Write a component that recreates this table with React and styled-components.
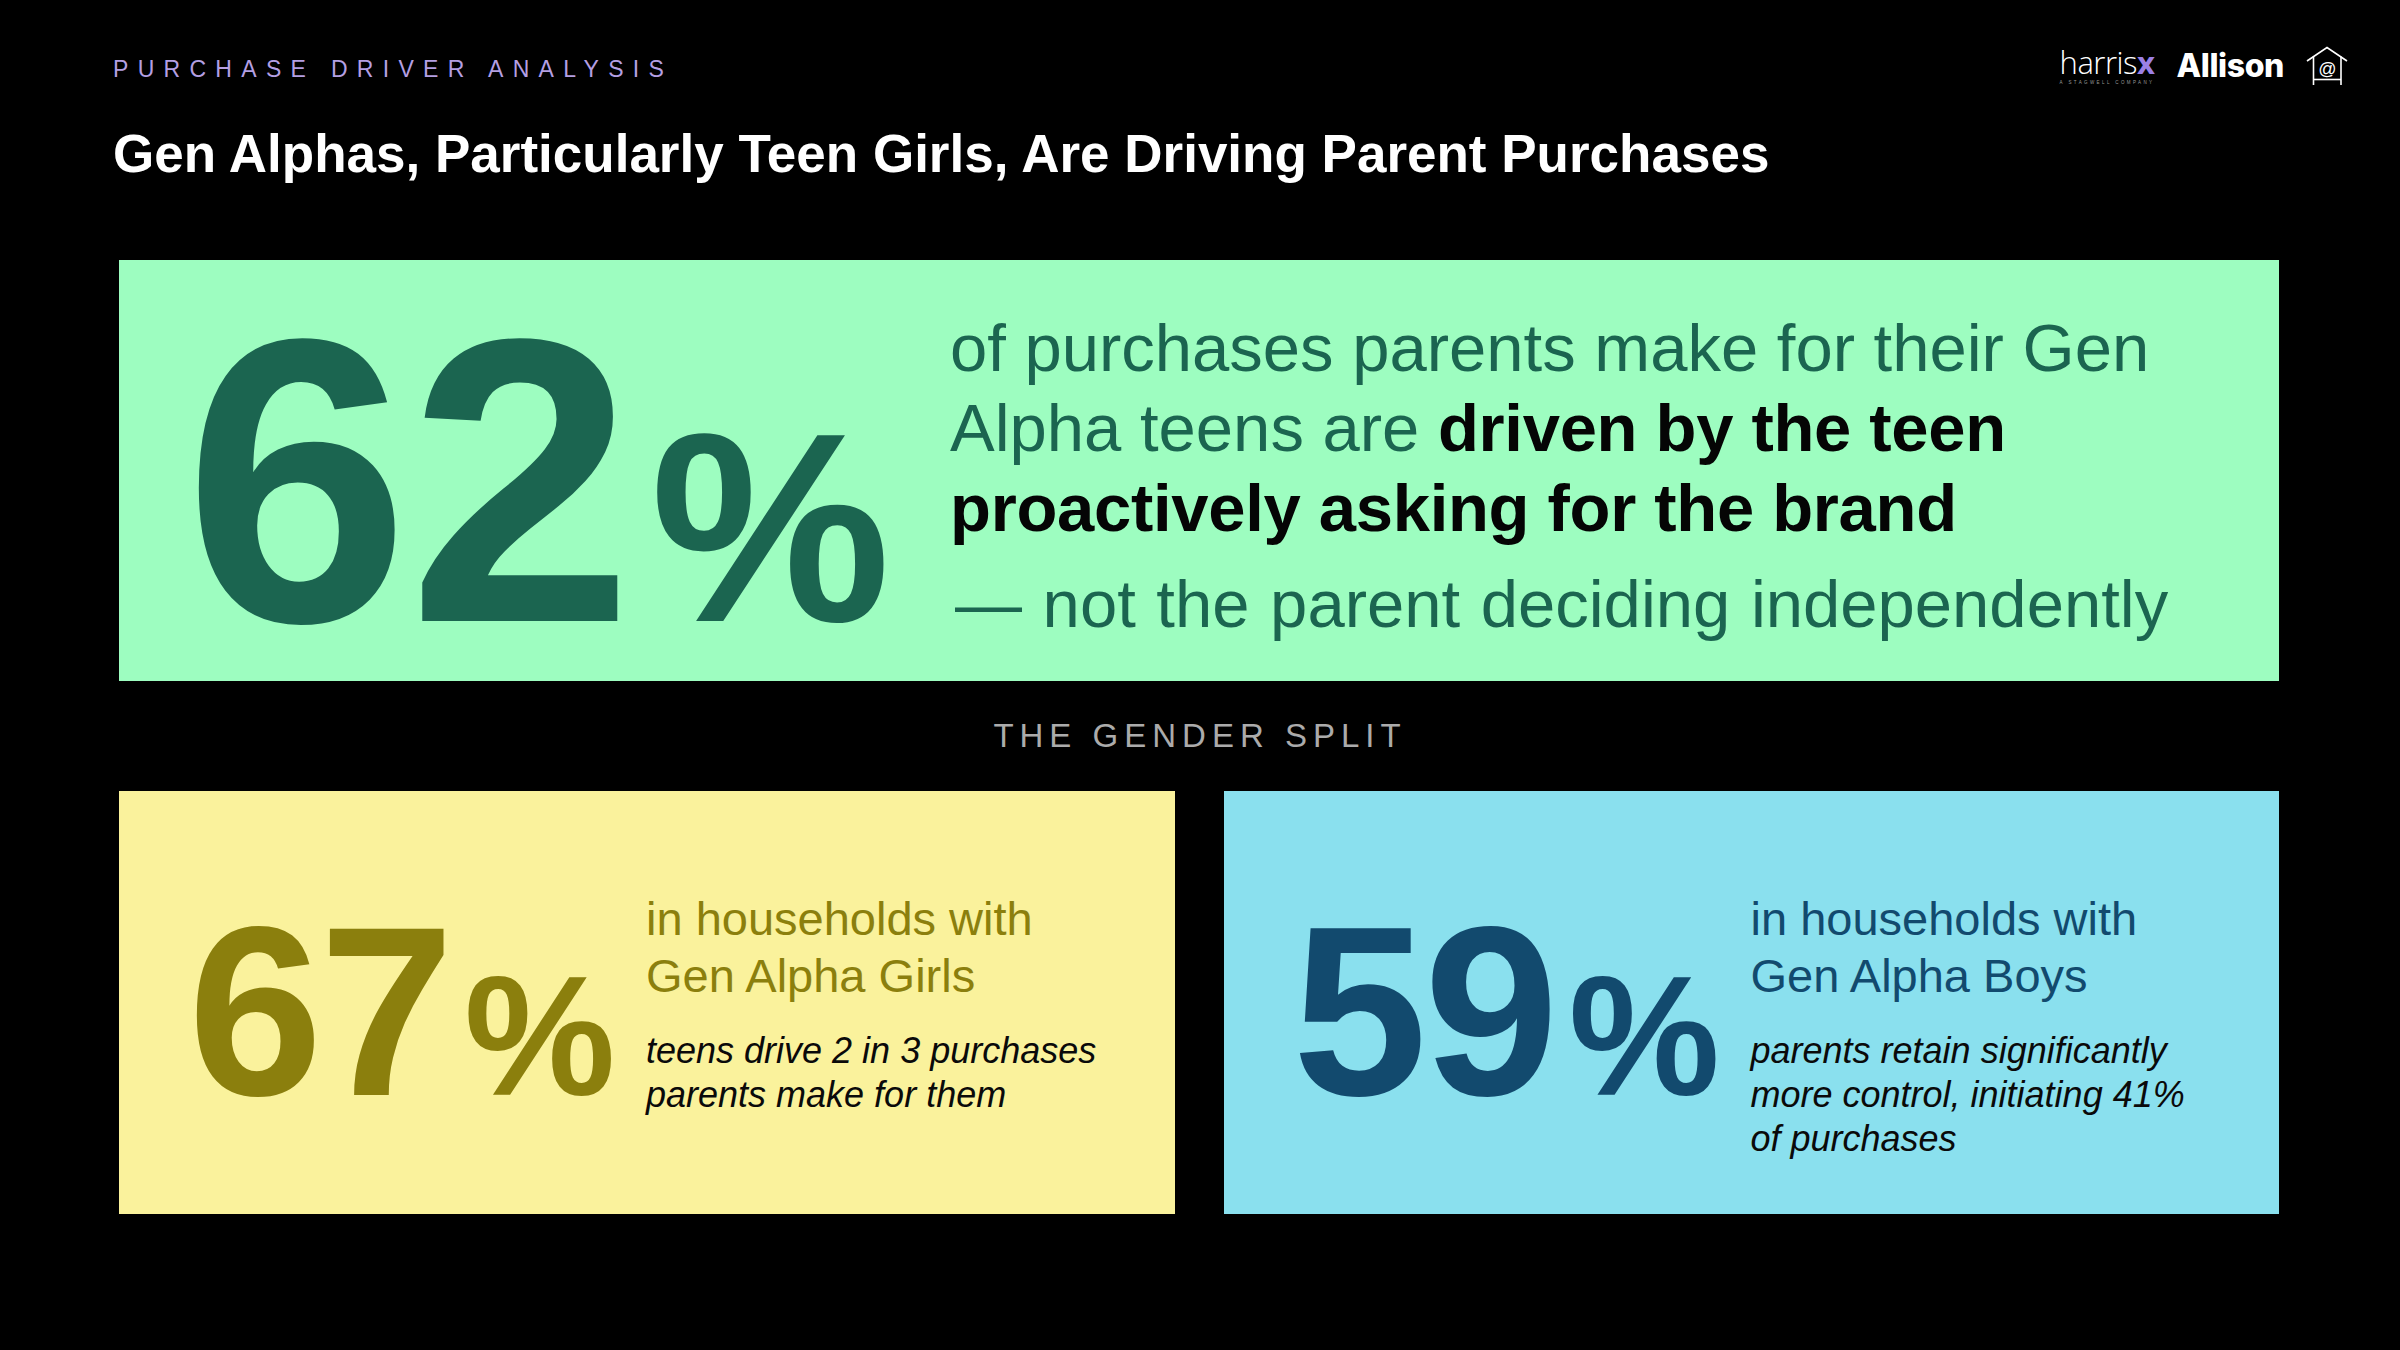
import React from 'react';
import styled, { createGlobalStyle } from 'styled-components';

const GlobalStyle = createGlobalStyle`
  html, body { margin: 0; padding: 0; background: #000; }
  body { font-family: "Liberation Sans", Arial, Helvetica, sans-serif; }
  *, *::before, *::after { box-sizing: border-box; }
`;

const Page = styled.div`
  width: 2400px;
  height: 1350px;
  background: #000;
  overflow: hidden;
  display: flex;
  flex-direction: column;
  padding: 56px 52px 0 113px;
`;

const Header = styled.header`
  display: flex;
  justify-content: space-between;
  align-items: flex-start;
`;

const HeadingGroup = styled.div`
  display: flex;
  flex-direction: column;
`;

const Eyebrow = styled.div`
  font-size: 23px;
  line-height: 1.2;
  letter-spacing: 9.3px;
  color: #b49fe3;
  text-transform: uppercase;
`;

const Title = styled.h1`
  margin: 38px 0 0;
  font-size: 53px;
  line-height: 1.2;
  font-weight: 700;
  color: #fff;
`;

const Logos = styled.div`
  display: flex;
  align-items: center;
  gap: 22px;
  margin-top: -10px;
`;

const HarrisLogo = styled.div`
  display: flex;
  flex-direction: column;
  align-items: flex-start;
`;

const HarrisWord = styled.div`
  font-family: "Open Sans", Lato, sans-serif;
  font-weight: 300;
  font-size: 31px;
  line-height: 1;
  color: #fff;
  letter-spacing: -0.5px;
`;

const HarrisX = styled.span`
  font-weight: 700;
  color: #9b80e6;
`;

const HarrisTag = styled.div`
  margin-top: 3px;
  font-size: 4.5px;
  line-height: 1;
  letter-spacing: 2.4px;
  color: #9a9a9a;
  font-family: "Liberation Sans", sans-serif;
`;

const AllisonLogo = styled.div`
  font-family: Inter, "Liberation Sans", sans-serif;
  font-weight: 800;
  font-size: 32px;
  letter-spacing: -0.4px;
  color: #fff;
  line-height: 1;
`;

const Main = styled.main`
  display: flex;
  flex-direction: column;
  margin: 75px 69px 0 6px;
`;

const HeroPanel = styled.section`
  height: 421px;
  background: #9dfdc0;
  display: flex;
  align-items: flex-start;
  padding-left: 65px;
`;

const HeroNumber = styled.div`
  flex: 0 0 766px;
  margin-top: 18px;
  font-size: 405px;
  line-height: 1;
  font-weight: 700;
  color: #1b6550;
  letter-spacing: -1px;
  white-space: nowrap;
`;

const Percent = styled.span`
  font-size: ${(p) => p.$size}px;
  margin-left: ${(p) => p.$gap}px;
  letter-spacing: 0;
`;

const HeroText = styled.div`
  margin-top: 48px;
  color: #1b6550;
  font-size: 67px;
  line-height: 80px;
  white-space: nowrap;
`;

const Strong = styled.strong`
  color: #050505;
  font-weight: 700;
  letter-spacing: -0.3px;
`;

const HeroTail = styled.p`
  margin: 16px 0 0;
  padding-left: 5px;
  word-spacing: 2px;
`;

const SectionLabel = styled.div`
  margin-top: 35px;
  text-align: center;
  font-size: 33px;
  line-height: 1.2;
  letter-spacing: 6px;
  padding-left: 2px;
  color: #ababab;
`;

const StatsGrid = styled.div`
  margin-top: 35px;
  display: grid;
  grid-template-columns: 1fr 1fr;
  gap: 49px;
`;

const tones = {
  girls: { bg: '#faf29c', fg: '#8b7f0d' },
  boys: { bg: '#8ae0ee', fg: '#124a6e' },
};

const StatCard = styled.section`
  height: 423px;
  background: ${(p) => tones[p.$tone].bg};
  color: ${(p) => tones[p.$tone].fg};
  display: flex;
  align-items: flex-start;
  padding: 94px 0 0 69px;
`;

const StatNumber = styled.div`
  flex: 0 0 458px;
  margin-top: 5px;
  font-size: 242px;
  line-height: 1;
  font-weight: 700;
  letter-spacing: -3px;
  white-space: nowrap;
`;

const StatText = styled.div`
  margin-top: 5px;
`;

const StatHeading = styled.h2`
  margin: 0;
  font-size: 47px;
  line-height: 57px;
  font-weight: 400;
`;

const StatNote = styled.p`
  margin: 25px 0 0;
  font-size: 36px;
  line-height: 44px;
  font-style: italic;
  color: #0a0a0a;
`;

const HouseIcon = () => (
  <svg width="42" height="40" viewBox="0 0 42 40" fill="none" stroke="#fff" strokeWidth="1.6">
    <polyline points="1,15 21,1.5 41,15" strokeLinejoin="miter" />
    <line x1="7.5" y1="10.5" x2="7.5" y2="39" />
    <line x1="35" y1="10.5" x2="35" y2="39" />
    <line x1="7.5" y1="33.5" x2="35" y2="33.5" />
    <text x="21.5" y="28.5" textAnchor="middle" fontSize="18" fill="#fff" stroke="none"
      fontFamily="'Liberation Sans', sans-serif">@</text>
  </svg>
);

const stats = [
  {
    tone: 'girls',
    value: '67',
    heading: ['in households with', 'Gen Alpha Girls'],
    note: ['teens drive 2 in 3 purchases', 'parents make for them'],
  },
  {
    tone: 'boys',
    value: '59',
    heading: ['in households with', 'Gen Alpha Boys'],
    note: ['parents retain significantly', 'more control, initiating 41%', 'of purchases'],
  },
];

const Lines = ({ lines }) =>
  lines.map((l, i) => (
    <React.Fragment key={i}>
      {l}
      {i < lines.length - 1 && <br />}
    </React.Fragment>
  ));

export default function App() {
  return (
    <>
      <GlobalStyle />
      <Page>
        <Header>
          <HeadingGroup>
            <Eyebrow>Purchase Driver Analysis</Eyebrow>
            <Title>Gen Alphas, Particularly Teen Girls, Are Driving Parent Purchases</Title>
          </HeadingGroup>
          <Logos>
            <HarrisLogo>
              <HarrisWord>
                harris<HarrisX>x</HarrisX>
              </HarrisWord>
              <HarrisTag>A STAGWELL COMPANY</HarrisTag>
            </HarrisLogo>
            <AllisonLogo>Allison</AllisonLogo>
            <HouseIcon />
          </Logos>
        </Header>
        <Main>
          <HeroPanel>
            <HeroNumber>
              62<Percent $size={270} $gap={18}>%</Percent>
            </HeroNumber>
            <HeroText>
              of purchases parents make for their Gen
              <br />
              Alpha teens are <Strong>driven by the teen</Strong>
              <br />
              <Strong>proactively asking for the brand</Strong>
              <HeroTail>— not the parent deciding independently</HeroTail>
            </HeroText>
          </HeroPanel>
          <SectionLabel>THE GENDER SPLIT</SectionLabel>
          <StatsGrid>
            {stats.map((s) => (
              <StatCard key={s.tone} $tone={s.tone}>
                <StatNumber>
                  {s.value}
                  <Percent $size={170} $gap={13}>%</Percent>
                </StatNumber>
                <StatText>
                  <StatHeading>
                    <Lines lines={s.heading} />
                  </StatHeading>
                  <StatNote>
                    <Lines lines={s.note} />
                  </StatNote>
                </StatText>
              </StatCard>
            ))}
          </StatsGrid>
        </Main>
      </Page>
    </>
  );
}
